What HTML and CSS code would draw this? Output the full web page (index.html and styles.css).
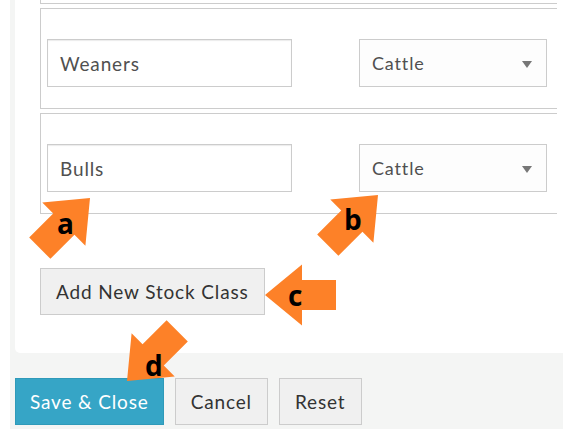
FILE: index.html
```html
<!DOCTYPE html>
<html>
<head>
<meta charset="utf-8">
<link rel="stylesheet" href="styles.css">
</head>
<body>
<div class="page">
  <div class="panel">
    <div class="card stub"></div>
    <div class="card">
      <div class="row">
        <div class="field">Weaners</div>
        <div class="select">Cattle<span class="caret"></span></div>
      </div>
    </div>
    <div class="card">
      <div class="row">
        <div class="field">Bulls</div>
        <div class="select">Cattle<span class="caret"></span></div>
      </div>
    </div>
    <button class="btn add">Add New Stock Class</button>
  </div>
  <div class="footer">
    <button class="btn primary">Save &amp; Close</button>
    <button class="btn">Cancel</button>
    <button class="btn">Reset</button>
  </div>
  <svg class="overlay" width="563" height="429" viewBox="0 0 563 429">
    <g class="arrow">
      <polygon transform="translate(90 198) rotate(-45)" points="0,0 -37,-30.5 -37,-15 -71,-15 -71,15 -37,15 -37,30.5"/>
      <polygon transform="translate(378 195) rotate(-45)" points="0,0 -37,-30.5 -37,-15 -71,-15 -71,15 -37,15 -37,30.5"/>
      <polygon transform="translate(265 295) rotate(180)" points="0,0 -37,-30.5 -37,-15 -71,-15 -71,15 -37,15 -37,30.5"/>
      <polygon transform="translate(127 381) rotate(135)" points="0,0 -37,-30.5 -37,-15 -71,-15 -71,15 -37,15 -37,30.5"/>
    </g>
    <text class="letter" x="57" y="234">a</text>
    <text class="letter" x="344" y="230">b</text>
    <text class="letter" x="288" y="306">c</text>
    <text class="letter" x="145" y="376">d</text>
  </svg>
</div>
</body>
</html>
```
FILE: styles.css
```css
html, body {
  margin: 0;
  padding: 0;
  background: #ffffff;
}
body {
  font-family: "Lato", "Noto Sans", sans-serif;
}
.page {
  position: relative;
  width: 553px;
  height: 429px;
  margin-left: 10px;
  padding-left: 5px;
  box-sizing: border-box;
  background: #f4f5f4;
  overflow: hidden;
}
.panel {
  display: flex;
  flex-direction: column;
  height: 353px;
  padding: 0 6px 0 25px;
  box-sizing: border-box;
  background: #ffffff;
  border-bottom-left-radius: 5px;
}
.card {
  border: 1px solid #cccccc;
  border-right: none;
  padding: 30px 0 21px 6px;
  margin-bottom: 4px;
}
.card.stub {
  border-top: none;
  padding: 0;
  height: 3px;
}
.row {
  display: flex;
  align-items: center;
}
.field, .select {
  height: 48px;
  box-sizing: border-box;
  border: 1px solid #cccccc;
  display: flex;
  align-items: center;
  padding-left: 12px;
  font-size: 19px;
  letter-spacing: 0.85px;
  color: #505050;
}
.field {
  width: 245px;
  box-shadow: inset 0 1px 1px rgba(0, 0, 0, 0.08);
}
.select {
  width: 188px;
  margin-left: 67px;
  position: relative;
  background: #fdfdfd;
  font-size: 18px;
}
.caret {
  position: absolute;
  right: 14px;
  top: 21px;
  width: 0;
  height: 0;
  border-left: 5px solid transparent;
  border-right: 5px solid transparent;
  border-top: 7px solid #777777;
}
.btn {
  font-family: "Lato", "Noto Sans", sans-serif;
  font-size: 19px;
  letter-spacing: 0.85px;
  height: 47px;
  padding: 0 15px;
  border: 1px solid #cccccc;
  background: #f0f0f0;
  color: #333333;
  margin: 0;
}
.btn.add {
  align-self: flex-start;
  margin-top: 50px;
}
.footer {
  display: flex;
  gap: 11px;
  padding-top: 25px;
}
.btn.primary {
  background: #36a5c6;
  border-color: #2f9ab9;
  color: #ffffff;
  padding: 0 14px;
}
.overlay {
  position: absolute;
  left: -10px;
  top: 0;
  pointer-events: none;
}
.arrow polygon {
  fill: #fd8128;
}
.letter {
  font-family: "Open Sans", "DejaVu Sans", sans-serif;
  font-weight: 700;
  font-size: 28px;
  fill: #000000;
}
```
